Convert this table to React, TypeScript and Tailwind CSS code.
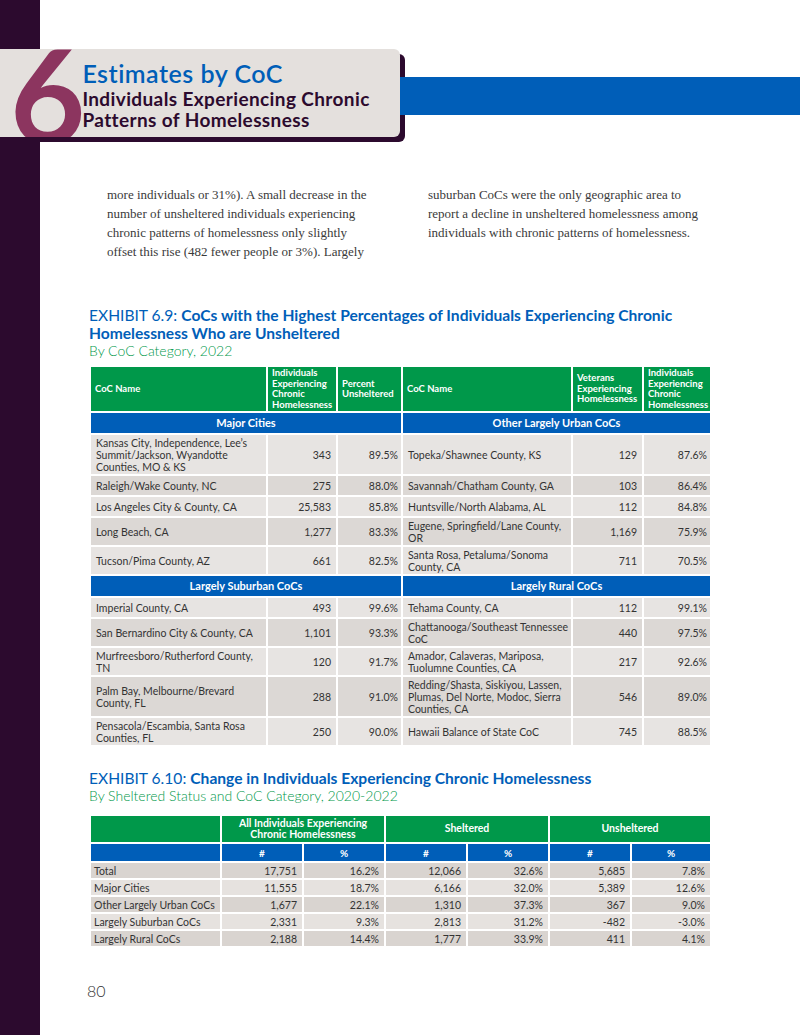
import React from "react";

type Row = [string, string, string, string, string, string];

const groups: { left: string; right: string; rows: Row[] }[] = [
  {
    left: "Major Cities",
    right: "Other Largely Urban CoCs",
    rows: [
      ["Kansas City, Independence, Lee’s\nSummit/Jackson, Wyandotte\nCounties, MO & KS", "343", "89.5%", "Topeka/Shawnee County, KS", "129", "87.6%"],
      ["Raleigh/Wake County, NC", "275", "88.0%", "Savannah/Chatham County, GA", "103", "86.4%"],
      ["Los Angeles City & County, CA", "25,583", "85.8%", "Huntsville/North Alabama, AL", "112", "84.8%"],
      ["Long Beach, CA", "1,277", "83.3%", "Eugene, Springfield/Lane County,\nOR", "1,169", "75.9%"],
      ["Tucson/Pima County, AZ", "661", "82.5%", "Santa Rosa, Petaluma/Sonoma\nCounty, CA", "711", "70.5%"],
    ],
  },
  {
    left: "Largely Suburban CoCs",
    right: "Largely Rural CoCs",
    rows: [
      ["Imperial County, CA", "493", "99.6%", "Tehama County, CA", "112", "99.1%"],
      ["San Bernardino City & County, CA", "1,101", "93.3%", "Chattanooga/Southeast Tennessee\nCoC", "440", "97.5%"],
      ["Murfreesboro/Rutherford County,\nTN", "120", "91.7%", "Amador, Calaveras, Mariposa,\nTuolumne Counties, CA", "217", "92.6%"],
      ["Palm Bay, Melbourne/Brevard\nCounty, FL", "288", "91.0%", "Redding/Shasta, Siskiyou, Lassen,\nPlumas, Del Norte, Modoc, Sierra\nCounties, CA", "546", "89.0%"],
      ["Pensacola/Escambia, Santa Rosa\nCounties, FL", "250", "90.0%", "Hawaii Balance of State CoC", "745", "88.5%"],
    ],
  },
];

const changes: string[][] = [
  ["Total", "17,751", "16.2%", "12,066", "32.6%", "5,685", "7.8%"],
  ["Major Cities", "11,555", "18.7%", "6,166", "32.0%", "5,389", "12.6%"],
  ["Other Largely Urban CoCs", "1,677", "22.1%", "1,310", "37.3%", "367", "9.0%"],
  ["Largely Suburban CoCs", "2,331", "9.3%", "2,813", "31.2%", "-482", "-3.0%"],
  ["Largely Rural CoCs", "2,188", "14.4%", "1,777", "33.9%", "411", "4.1%"],
];

function HighestTable() {
  const th = "border-2 border-white bg-[#00984a] px-[4px] text-left align-middle text-[9.5px] font-bold leading-[10.5px] text-white";
  const name = "border-2 border-white px-[5px] py-[1.5px] text-left whitespace-pre";
  const num = "border-2 border-white px-[5px] py-[1.5px] text-right";
  const pct = "border-2 border-white px-[3px] py-[1.5px] text-right";
  return (
    <table className="w-[621px] table-fixed border-collapse text-[10.5px] leading-[12px] text-[#333]">
      <colgroup>
        <col className="w-[177px]" />
        <col className="w-[70px]" />
        <col className="w-[65px]" />
        <col className="w-[170px]" />
        <col className="w-[71px]" />
        <col className="w-[68px]" />
      </colgroup>
      <thead>
        <tr className="h-[46px]">
          <th className={th}>CoC Name</th>
          <th className={th}>Individuals<br />Experiencing<br />Chronic<br />Homelessness</th>
          <th className={th}>Percent<br />Unsheltered</th>
          <th className={th}>CoC Name</th>
          <th className={th}>Veterans<br />Experiencing<br />Homelessness</th>
          <th className={th}>Individuals<br />Experiencing<br />Chronic<br />Homelessness</th>
        </tr>
      </thead>
      <tbody>
        {groups.map((g) => (
          <React.Fragment key={g.left}>
            <tr className="h-[22px]">
              <td colSpan={3} className="border-2 border-white bg-[#005eb8] text-center text-[11px] font-bold text-white">{g.left}</td>
              <td colSpan={3} className="border-2 border-white bg-[#005eb8] text-center text-[11px] font-bold text-white">{g.right}</td>
            </tr>
            {g.rows.map((r, i) => (
              <tr key={r[0]} className={i % 2 === 0 ? "h-[21px] bg-[#e7e4e2]" : "h-[21px] bg-[#dcd8d5]"}>
                <td className={name}>{r[0]}</td>
                <td className={num}>{r[1]}</td>
                <td className={pct}>{r[2]}</td>
                <td className={name}>{r[3]}</td>
                <td className={num}>{r[4]}</td>
                <td className={pct}>{r[5]}</td>
              </tr>
            ))}
          </React.Fragment>
        ))}
      </tbody>
    </table>
  );
}

function ChangeTable() {
  const green = "border-2 border-white bg-[#00984a] text-center text-[10.5px] font-bold leading-[11.5px] text-white";
  const blue = "border-2 border-white bg-[#005eb8] text-center text-[10px] font-bold text-white";
  const cell = "border-2 border-white px-[5px] text-right";
  return (
    <table className="w-[621px] table-fixed border-collapse text-[10.5px] leading-[12px] text-[#333]">
      <colgroup>
        <col className="w-[131px]" />
        <col className="w-[82px]" />
        <col className="w-[82px]" />
        <col className="w-[82px]" />
        <col className="w-[82px]" />
        <col className="w-[82px]" />
        <col className="w-[80px]" />
      </colgroup>
      <thead>
        <tr className="h-[28px]">
          <th className={green}></th>
          <th colSpan={2} className={green}>All Individuals Experiencing<br />Chronic Homelessness</th>
          <th colSpan={2} className={green}>Sheltered</th>
          <th colSpan={2} className={green}>Unsheltered</th>
        </tr>
        <tr className="h-[19px]">
          <th className={blue}></th>
          <th className={blue}>#</th>
          <th className={blue}>%</th>
          <th className={blue}>#</th>
          <th className={blue}>%</th>
          <th className={blue}>#</th>
          <th className={blue}>%</th>
        </tr>
      </thead>
      <tbody>
        {changes.map((r, i) => (
          <tr key={r[0]} className={i % 2 === 0 ? "h-[17px] bg-[#d9d4d0]" : "h-[17px] bg-[#e6e2df]"}>
            <td className="border-2 border-white px-[3px] text-left">{r[0]}</td>
            {r.slice(1).map((v, j) => (
              <td key={j} className={cell}>{v}</td>
            ))}
          </tr>
        ))}
      </tbody>
    </table>
  );
}

export default function App() {
  return (
    <div className="flex min-h-[1035px] w-[800px] bg-white font-['Lato',sans-serif]">
      <div className="w-[40px] shrink-0 bg-[#2c0a2e]" />
      <div className="flex min-w-0 flex-1 flex-col">
        <header className="relative z-10 -ml-[40px] flex items-start pt-[49px]">
          <div className="flex h-[88px] w-[400px] shrink-0 items-start overflow-hidden rounded-r-[6px] bg-[#e4e0dd] shadow-[5px_5px_0_#2c0a2e]">
            <span className="ml-[10px] mt-[-20px] text-[130px] font-bold leading-none text-[#8c355f]">6</span>
            <div className="ml-[-3px] mt-[9px] flex flex-col">
              <h1 className="text-[25px] font-semibold leading-[30px] tracking-[0.02em] text-[#005eb8]">Estimates by CoC</h1>
              <h2 className="text-[19px] font-bold leading-[21px] tracking-[0.02em] text-[#2c0a2e]">
                Individuals Experiencing Chronic
                <br />
                Patterns of Homelessness
              </h2>
            </div>
          </div>
          <div className="relative z-10 mt-[28px] h-[38px] flex-1 bg-[#005eb8]" />
        </header>

        <section className="mt-[48px] flex gap-[51px] pl-[67px] font-['Liberation_Serif',serif] text-[13px] leading-[19px] text-[#3a3a3a]">
          <p className="w-[270px] whitespace-nowrap">
            more individuals or 31%). A small decrease in the
            <br />
            number of unsheltered individuals experiencing
            <br />
            chronic patterns of homelessness only slightly
            <br />
            offset this rise (482 fewer people or 3%). Largely
          </p>
          <p className="w-[290px] whitespace-nowrap">
            suburban CoCs were the only geographic area to
            <br />
            report a decline in unsheltered homelessness among
            <br />
            individuals with chronic patterns of homelessness.
          </p>
        </section>

        <section className="mt-[45px] pl-[49px]">
          <h3 className="whitespace-nowrap text-[15.6px] leading-[18px] text-[#005eb8]">
            EXHIBIT 6.9: <span className="font-bold">CoCs with the Highest Percentages of Individuals Experiencing Chronic</span>
            <br />
            <span className="font-bold">Homelessness Who are Unsheltered</span>
          </h3>
          <p className="text-[14px] font-light leading-[18px] text-[#00984a]">By CoC Category, 2022</p>
          <div className="mt-[5px]">
            <HighestTable />
          </div>
        </section>

        <section className="mt-[22px] pl-[49px]">
          <h3 className="whitespace-nowrap text-[15.6px] leading-[18px] text-[#005eb8]">
            EXHIBIT 6.10: <span className="font-bold">Change in Individuals Experiencing Chronic Homelessness</span>
          </h3>
          <p className="text-[14px] font-light leading-[18px] text-[#00984a]">By Sheltered Status and CoC Category, 2020-2022</p>
          <div className="mt-[9px]">
            <ChangeTable />
          </div>
        </section>

        <p className="mt-[33px] pl-[47px] text-[16px] font-light leading-[20px] text-[#333]">80</p>
      </div>
    </div>
  );
}
